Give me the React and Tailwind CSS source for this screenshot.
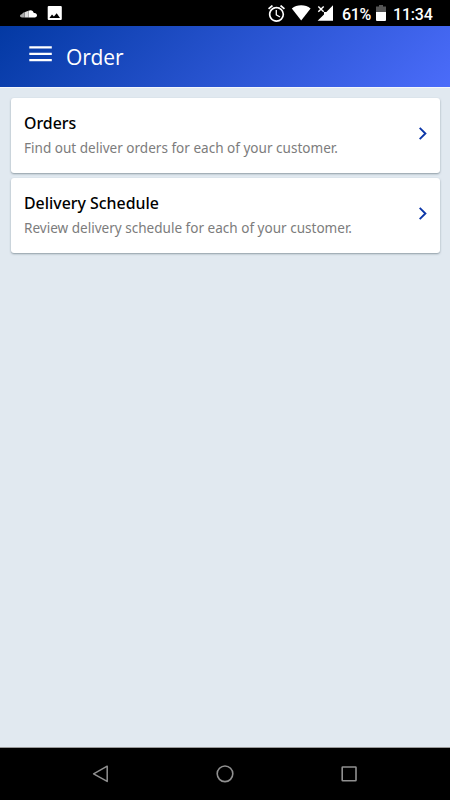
import React from "react";

const menuItems = [
  {
    title: "Orders",
    description: "Find out deliver orders for each of your customer.",
  },
  {
    title: "Delivery Schedule",
    description: "Review delivery schedule for each of your customer.",
  },
];

const StatusBar = () => {
  return (
    <div className="h-[26px] shrink-0 flex items-center bg-black text-white pl-5 pr-[17px]">
      {/* Notifications */}
      <svg className="w-[17px] h-2 mt-px" viewBox="0 0 17 8">
        <path d="M8.5 .8C10.8-.6 13.4.6 13.8 3 15.6 2.6 17 3.7 17 5.3 17 6.6 16 7.4 14.8 7.4H8.5Z" fill="#fff" />
        <path d="M4.6 2.2 6.4 1.4 8.5.8V7.4H4.6Z" fill="#ddd" />
        <path d="M4.6 2.2V7.4H2C.8 7.4 0 6.7 0 5.8S.9 4.3 2 4.3C2.3 3.1 3.3 2.3 4.6 2.2Z" fill="#aaa" />
      </svg>
      <svg className="w-[15px] h-[15px] ml-[10px]" viewBox="0 0 15 15" fill="#fff">
        <path
          fillRule="evenodd"
          d="M1.8 0H13.7Q14.8 0 14.8 1.1V12.9Q14.8 14 13.7 14H1.8Q.7 14 .7 12.9V1.1Q.7 0 1.8 0ZM2.4 12H13L9.7 7.2 6.9 10.6 5 8.5Z"
        />
      </svg>

      {/* System icons */}
      <svg className="w-[17px] h-[17px] ml-auto" viewBox="2 2 20 20" fill="#fff">
        <path d="M22 5.72l-4.6-3.86-1.29 1.53 4.6 3.86L22 5.72zM7.88 3.39L6.6 1.86 2 5.71l1.29 1.53 4.59-3.85zM12.5 8H11v6l4.75 2.85.75-1.23-4-2.37V8zM12 4c-4.97 0-9 4.03-9 9s4.02 9 9 9a9 9 0 0 0 0-18zm0 16c-3.87 0-7-3.13-7-7s3.13-7 7-7 7 3.13 7 7-3.13 7-7 7z" />
      </svg>
      <svg className="w-5 h-4 ml-1.5" viewBox="0 0 20 16" fill="#fff">
        <path d="M10.2 15.6 .8 3.4C3.4 1.3 6.6.2 10.2.2S17 1.3 19.6 3.4Z" />
      </svg>
      <svg className="w-4 h-4 ml-[6px]" viewBox="0 0 16 16">
        <path d="M16 .2V15.8H.6L7 9.4V7H9.4Z" fill="#fff" />
        <path d="M1.3 1.4 6.7 6.8M6.7 1.4 1.3 6.8" stroke="#fff" strokeWidth="1.4" />
      </svg>
      <span className="w-[29px] ml-[9px] whitespace-nowrap font-['Roboto',sans-serif] font-medium text-base leading-none tracking-[-0.3px] mt-[3px]">
        61%
      </span>
      <svg className="w-[10px] h-4 ml-[5px]" viewBox="0 0 10 16">
        <path d="M3 0H7V1.5H10V7H0V1.5H3Z" fill="#555" />
        <path d="M0 7H10V15Q10 16 9 16H1Q0 16 0 15Z" fill="#fff" />
      </svg>
      <span className="w-10 ml-[7px] whitespace-nowrap font-['Roboto',sans-serif] font-medium text-base leading-none tracking-[-0.2px] mt-[3px]">
        11:34
      </span>
    </div>
  );
};

const Header = () => {
  return (
    <header className="h-[62px] shrink-0 flex items-center pl-[29px] border-b border-[#f4f7fc] bg-[linear-gradient(135deg,#0339a3_0%,#4b6cfa_100%)] bg-origin-border">
      <button type="button" aria-label="Menu" className="w-[23px] -mt-[5px]">
        <svg className="w-[23px] h-[17px]" viewBox="0 0 23 17" stroke="#fff" strokeWidth="2.2">
          <path d="M.3 1.4H22.8M.3 7.8H22.8M.3 14.2H22.8" />
        </svg>
      </button>
      <h1 className="ml-[14px] text-white text-[21px] leading-7 tracking-[-0.15px]">Order</h1>
    </header>
  );
};

const MenuCard = ({ title, description }) => {
  return (
    <a
      href="#"
      className="h-[75px] flex items-center justify-between pl-[13px] pr-[13px] bg-white rounded-[3px] shadow-[0_1px_2px_rgba(60,80,90,0.5)]"
    >
      <div>
        <h2 className="text-[15.9px] leading-6 font-medium text-black font-['Noto_Sans',sans-serif]">{title}</h2>
        <p className="mt-px text-[13.55px] leading-6 text-[#7c7c7c] font-['Noto_Sans',sans-serif]">{description}</p>
      </div>
      <svg className="w-[9px] h-[14px] mt-[-4px]" viewBox="0 0 9 14" fill="none" stroke="#0b36a8" strokeWidth="1.9">
        <path d="M1.7 .8 7.4 6.5 1.7 12.2" />
      </svg>
    </a>
  );
};

const NavigationBar = () => {
  return (
    <nav className="h-[53px] shrink-0 flex items-center justify-between bg-black border-t border-[#999] pl-[92px] pr-[92px]">
      <svg className="w-[18px] h-[18px]" viewBox="0 0 18 18" fill="none" stroke="#909090" strokeWidth="1.5" strokeLinejoin="round">
        <path d="M15.2 1.2V16.4L1.6 8.8Z" />
      </svg>
      <svg className="w-[18px] h-[18px]" viewBox="0 0 18 18" fill="none" stroke="#909090" strokeWidth="1.6">
        <circle cx="9" cy="8.8" r="7.8" />
      </svg>
      <svg className="w-[18px] h-[18px]" viewBox="0 0 18 18" fill="none" stroke="#909090" strokeWidth="1.6">
        <rect x="2.2" y="2" width="13.8" height="13.8" rx=".6" />
      </svg>
    </nav>
  );
};

const App = () => {
  return (
    <div className="w-[450px] h-[800px] flex flex-col overflow-hidden bg-[#e1e9f0] font-['Open_Sans',sans-serif]">
      <StatusBar />
      <Header />
      <main className="flex-1 flex flex-col gap-[5px] pt-[10px] pl-[11px] pr-[10px]">
        {menuItems.map((item) => (
          <MenuCard key={item.title} title={item.title} description={item.description} />
        ))}
      </main>
      <NavigationBar />
    </div>
  );
};

export default App;
